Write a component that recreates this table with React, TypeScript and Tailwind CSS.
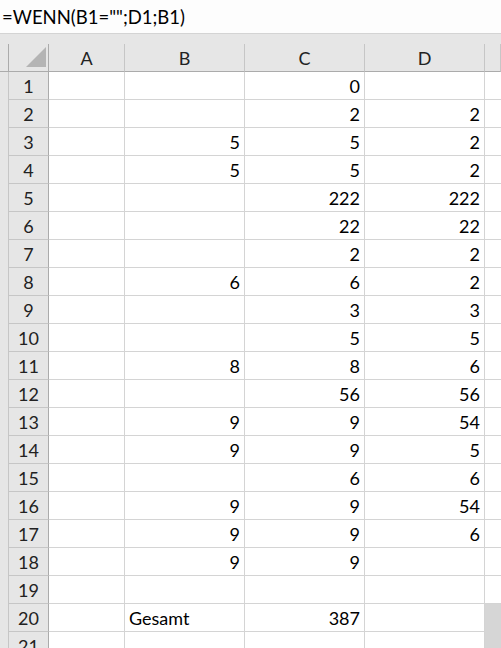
const rows: [string, string, string][] = [
  ['', '0', ''],
  ['', '2', '2'],
  ['5', '5', '2'],
  ['5', '5', '2'],
  ['', '222', '222'],
  ['', '22', '22'],
  ['', '2', '2'],
  ['6', '6', '2'],
  ['', '3', '3'],
  ['', '5', '5'],
  ['8', '8', '6'],
  ['', '56', '56'],
  ['9', '9', '54'],
  ['9', '9', '5'],
  ['', '6', '6'],
  ['9', '9', '54'],
  ['9', '9', '6'],
  ['9', '9', ''],
  ['', '', ''],
  ['Gesamt', '387', ''],
  ['', '', ''],
];

const font = { fontFamily: 'Lato, "Open Sans", sans-serif' };

function Cell({ value, align = 'right' }: { value: string; align?: 'left' | 'right' }) {
  const isText = align === 'left';
  return (
    <div
      className={`h-[28px] border-r border-b border-[#d4d4d4] bg-white px-[4px] pt-px text-[18px] leading-[26px] text-black ${
        isText ? 'text-left' : 'text-right'
      }`}
    >
      {value}
    </div>
  );
}

export default function App() {
  return (
    <div className="h-[648px] w-[501px] overflow-hidden bg-white" style={font}>
      {/* formula bar */}
      <div className="h-[34px] border-b border-[#d4d4d4] bg-[#fdfdfd] pl-[2px] pt-[2px] text-[18.5px] leading-[31px] text-black">
        =WENN(B1="";D1;B1)
      </div>

      <div className="grid grid-cols-[8px_41px_76px_120px_120px_120px_1fr]">
        {/* gray band above headers */}
        <div className="col-span-7 h-[10px] bg-[#e6e6e6]" />

        {/* column header row */}
        <div className="h-[28px] border-b border-[#ababab] bg-[#e6e6e6]" />
        <div className="relative h-[28px] border-l border-r border-b border-[#ababab] bg-[#e6e6e6]">
          <svg className="absolute left-[17px] top-[3px]" width="20" height="21" viewBox="0 0 20 21">
            <polygon points="20,0 20,20 0,20" fill="#b4b4b4" />
          </svg>
        </div>
        {['A', 'B', 'C', 'D', ''].map((c, i) => (
          <div
            key={i}
            className="h-[28px] border-r border-b border-r-[#c6c6c6] border-b-[#ababab] bg-[#e6e6e6] pt-px text-center text-[18px] leading-[26px] text-[#222]"
          >
            {c}
          </div>
        ))}

        {rows.map((r, i) => {
          const last = i >= 19;
          return [
            <div key={`s${i}`} className="h-[28px] bg-[#e6e6e6]" />,
            <div
              key={`h${i}`}
              className="h-[28px] border-l border-r border-b border-l-[#c6c6c6] border-r-[#ababab] border-b-[#c6c6c6] bg-[#e6e6e6] pt-px text-center text-[18px] leading-[26px] text-[#222]"
            >
              {i + 1}
            </div>,
            <Cell key={`a${i}`} value="" />,
            <Cell key={`b${i}`} value={r[0]} align={r[0] === 'Gesamt' ? 'left' : 'right'} />,
            <Cell key={`c${i}`} value={r[1]} />,
            <Cell key={`d${i}`} value={r[2]} />,
            last ? (
              <div key={`e${i}`} className="h-[28px] bg-[#d6d6d6]" />
            ) : (
              <div key={`e${i}`} className="h-[28px] border-b border-[#d4d4d4] bg-white" />
            ),
          ];
        })}
      </div>
    </div>
  );
}
